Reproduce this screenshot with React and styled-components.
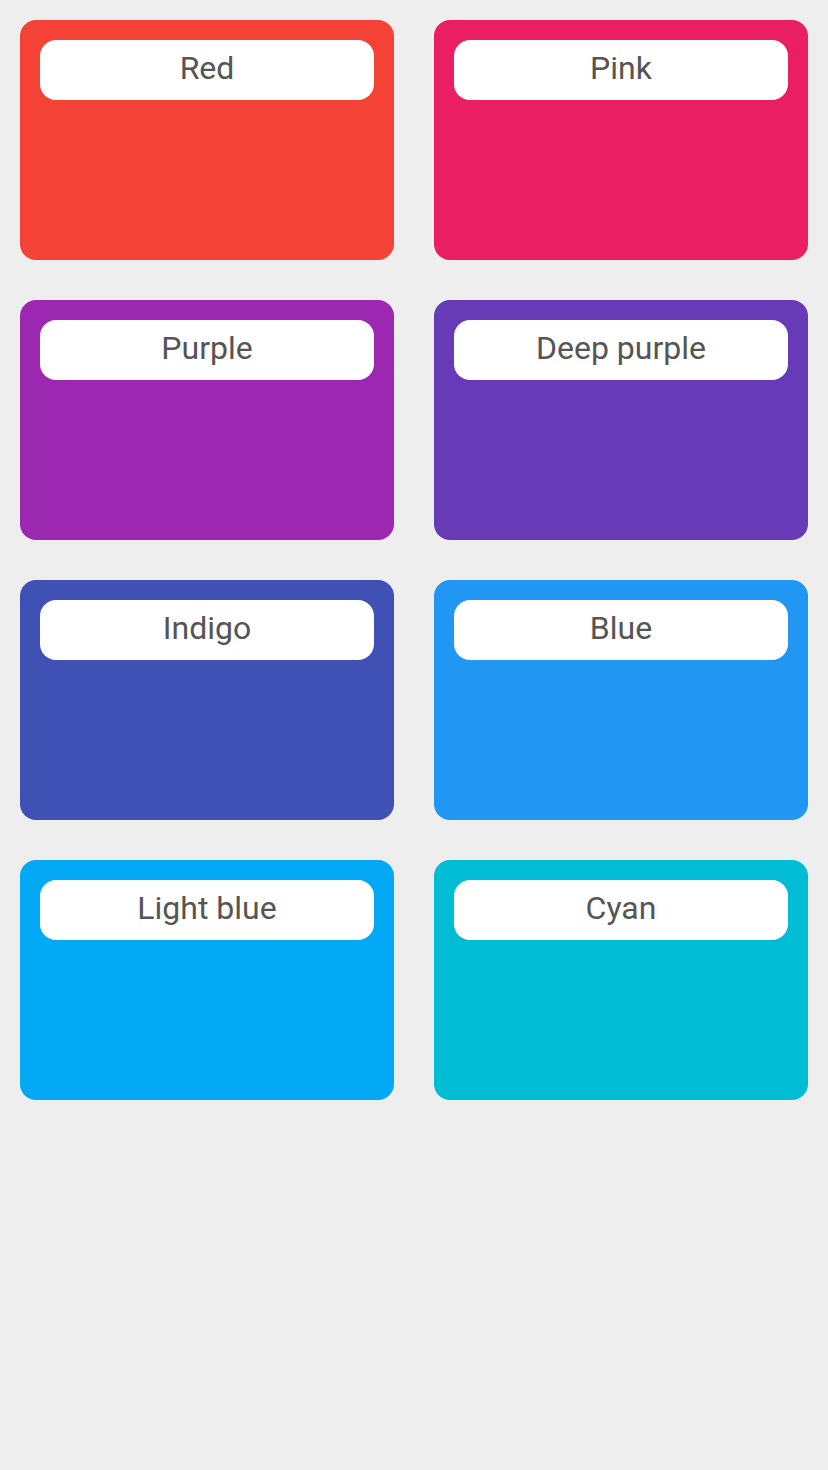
import styled, { createGlobalStyle } from "styled-components";

const colors = [
  { name: "Red", color: "#f44336" },
  { name: "Pink", color: "#e91e63" },
  { name: "Purple", color: "#9c27b0" },
  { name: "Deep purple", color: "#673ab7" },
  { name: "Indigo", color: "#3f51b5" },
  { name: "Blue", color: "#2196f3" },
  { name: "Light blue", color: "#03a9f4" },
  { name: "Cyan", color: "#00bcd4" },
];

const GlobalStyle = createGlobalStyle`
  html, body {
    margin: 0;
    padding: 0;
    background: #eeeeee;
  }
  body {
    font-family: Roboto, "Noto Sans", sans-serif;
  }
`;

function App() {
  return (
    <>
      <GlobalStyle />
      <Page>
        <Grid>
          {colors.map((c) => (
            <Card key={c.name} $bg={c.color}>
              <Label>{c.name}</Label>
            </Card>
          ))}
        </Grid>
      </Page>
    </>
  );
}

export default App;

const Page = styled.div`
  width: 828px;
  min-height: 1470px;
  box-sizing: border-box;
  padding: 20px;
  background: #eeeeee;
`;

const Grid = styled.div`
  display: grid;
  grid-template-columns: 374px 374px;
  column-gap: 40px;
  row-gap: 40px;
`;

const Card = styled.div`
  height: 240px;
  box-sizing: border-box;
  padding: 20px;
  border-radius: 16px;
  background-color: ${(p) => p.$bg};
`;

const Label = styled.div`
  height: 60px;
  border-radius: 16px;
  background: #ffffff;
  color: #555555;
  font-size: 32px;
  line-height: 56px;
  text-align: center;
`;
